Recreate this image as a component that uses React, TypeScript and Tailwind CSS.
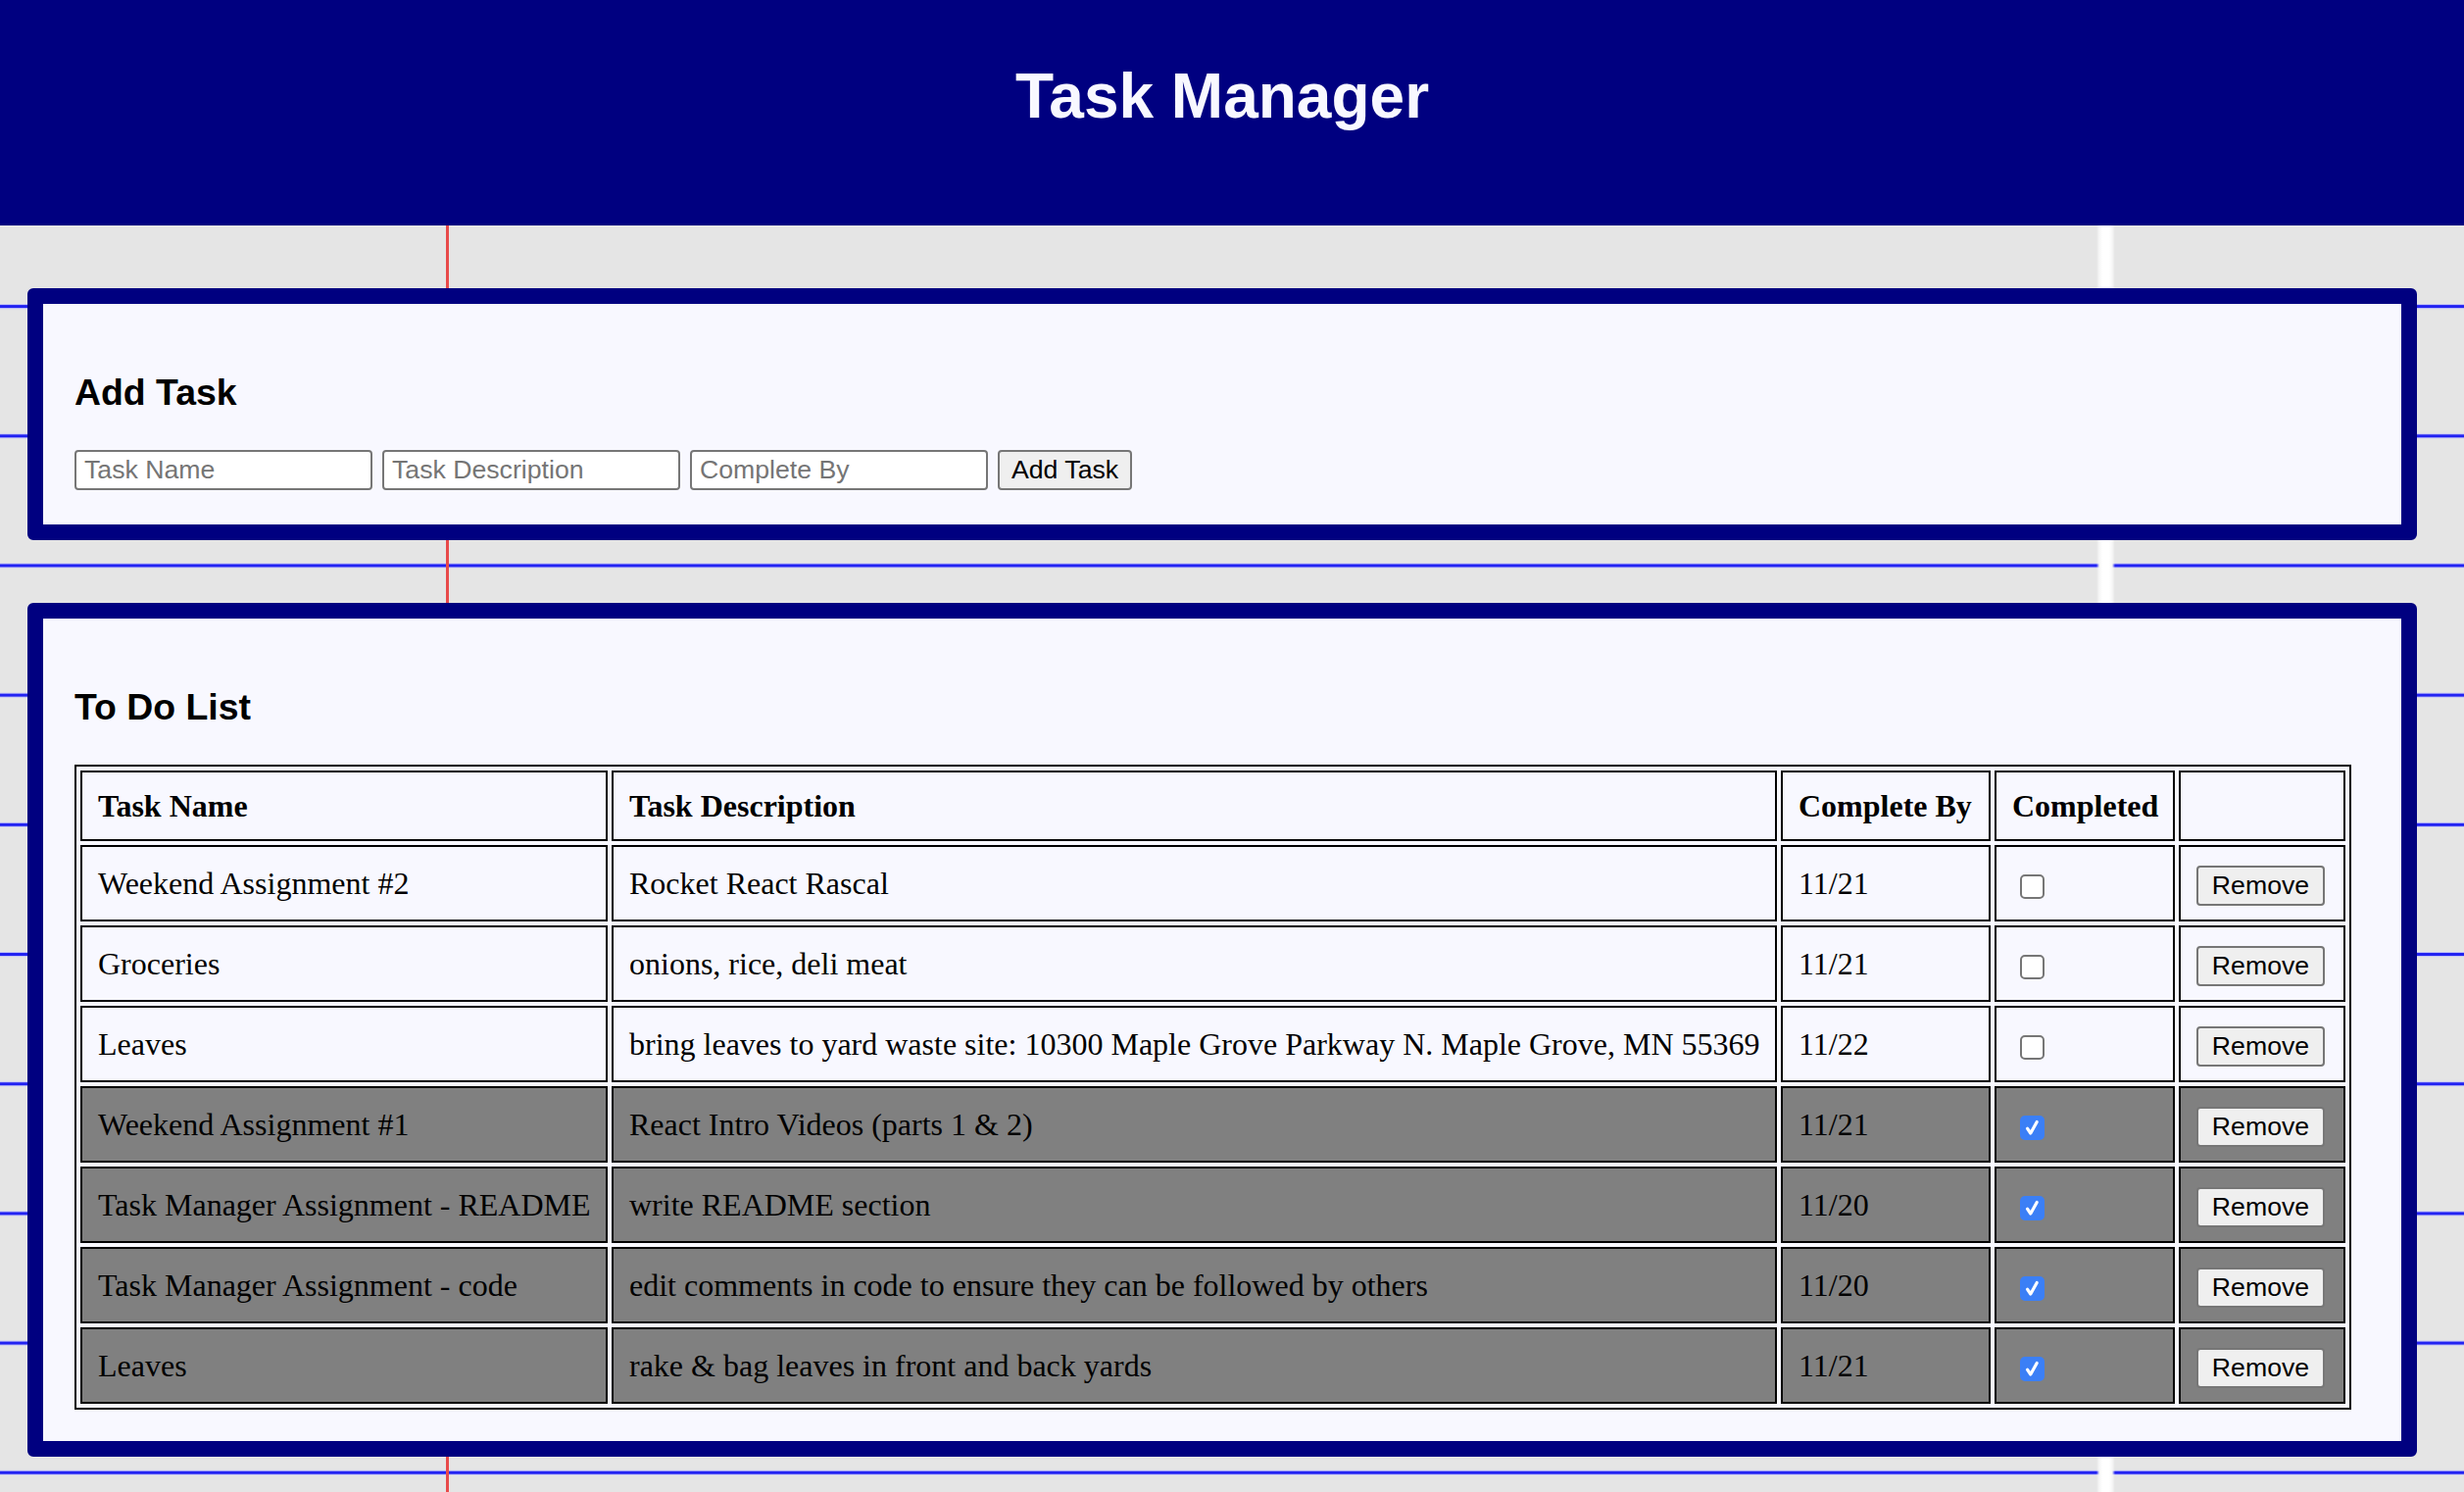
import React from 'react';

type Task = {
  name: string;
  description: string;
  completeBy: string;
  completed: boolean;
};

const initialTasks: Task[] = [
  { name: 'Weekend Assignment #2', description: 'Rocket React Rascal', completeBy: '11/21', completed: false },
  { name: 'Groceries', description: 'onions, rice, deli meat', completeBy: '11/21', completed: false },
  { name: 'Leaves', description: 'bring leaves to yard waste site: 10300 Maple Grove Parkway N. Maple Grove, MN 55369', completeBy: '11/22', completed: false },
  { name: 'Weekend Assignment #1', description: 'React Intro Videos (parts 1 & 2)', completeBy: '11/21', completed: true },
  { name: 'Task Manager Assignment - README', description: 'write README section', completeBy: '11/20', completed: true },
  { name: 'Task Manager Assignment - code', description: 'edit comments in code to ensure they can be followed by others', completeBy: '11/20', completed: true },
  { name: 'Leaves', description: 'rake & bag leaves in front and back yards', completeBy: '11/21', completed: true },
];

const Card: React.FC<{ title: string; children: React.ReactNode }> = ({ title, children }) => (
  <section className="ml-[28px] mt-[64px] w-[2438px] rounded-[6px] border-[16px] border-[#000080] bg-[#f8f8ff] p-[32px]">
    <h3 className="my-[37px] font-['Liberation_Sans',Arial,sans-serif] text-[37.4px] font-bold leading-[43px] text-black">
      {title}
    </h3>
    {children}
  </section>
);

const CheckBox: React.FC<{ checked: boolean; onChange: () => void }> = ({ checked, onChange }) => (
  <span className="relative ml-[8px] inline-block h-[25px] w-[25px] align-middle">
    <input
      type="checkbox"
      checked={checked}
      onChange={onChange}
      className={`block h-[25px] w-[25px] cursor-pointer appearance-none rounded-[5px] ${
        checked ? 'bg-[#3b7ff6]' : 'border-2 border-[#767676] bg-white'
      }`}
    />
    {checked && (
      <svg viewBox="0 0 25 25" className="pointer-events-none absolute inset-0 h-[25px] w-[25px]">
        <path d="M7.5 13.2 L10.8 18 L17.2 6.5" fill="none" stroke="white" strokeWidth="3.2" strokeLinecap="round" strokeLinejoin="round" />
      </svg>
    )}
  </span>
);

const App: React.FC = () => {
  const [tasks, setTasks] = React.useState<Task[]>(initialTasks);
  const [name, setName] = React.useState('');
  const [description, setDescription] = React.useState('');
  const [completeBy, setCompleteBy] = React.useState('');

  const addTask = () => {
    if (!name) return;
    setTasks([{ name, description, completeBy, completed: false }, ...tasks]);
    setName('');
    setDescription('');
    setCompleteBy('');
  };

  const toggle = (i: number) =>
    setTasks(tasks.map((t, idx) => (idx === i ? { ...t, completed: !t.completed } : t)));

  const remove = (i: number) => setTasks(tasks.filter((_, idx) => idx !== i));

  const inputClass =
    "h-[41px] w-[304px] rounded-[4px] border-2 border-[#767676] bg-white px-[8px] font-['Liberation_Sans',Arial,sans-serif] text-[26.67px] text-black placeholder:text-[#757575] outline-none";
  const buttonClass =
    "h-[41px] rounded-[4px] border-2 border-[#767676] bg-[#efefef] px-[12px] font-['Liberation_Sans',Arial,sans-serif] text-[26.67px] leading-none text-black";

  return (
    <div className="min-h-screen bg-[#e5e5e5] bg-[linear-gradient(to_right,transparent_455px,#e84a4a_455px,#e84a4a_458px,transparent_458px),linear-gradient(to_right,transparent_2139px,#f6f6f6_2142px,#ffffff_2145px,#ffffff_2152px,#f6f6f6_2155px,transparent_2158px),linear-gradient(to_bottom,transparent_46px,#c4c4f6_46px,#c4c4f6_47px,#2323f2_47px,#2323f2_50px,#c4c4f6_50px,#c4c4f6_51px,transparent_51px)] bg-[length:100%_132.2px] pb-[40px]">
      {/* Header */}
      <header className="h-[230px] bg-[#000080]">
        <h1 className="ml-[28px] w-[2438px] pt-[50px] text-center font-['Liberation_Sans',Arial,sans-serif] text-[64px] font-bold text-[#f8f8ff]">
          Task Manager
        </h1>
      </header>

      {/* Add Task */}
      <Card title="Add Task">
        <div className="mb-[3px] flex items-center gap-[10px]">
          <input className={inputClass} placeholder="Task Name" value={name} onChange={e => setName(e.target.value)} />
          <input className={inputClass} placeholder="Task Description" value={description} onChange={e => setDescription(e.target.value)} />
          <input className={inputClass} placeholder="Complete By" value={completeBy} onChange={e => setCompleteBy(e.target.value)} />
          <button className={buttonClass} onClick={addTask}>
            Add Task
          </button>
        </div>
      </Card>

      {/* To Do List */}
      <Card title="To Do List">
        <table className="mt-[3px] w-[2323px] table-fixed border-separate border-spacing-[4px] border-2 border-black font-['Liberation_Serif','Times_New_Roman',serif] text-[32px] text-black">
          <thead>
            <tr>
              <th className="h-[72px] w-[538px] border-2 border-black px-[16px] text-left font-bold">Task Name</th>
              <th className="h-[72px] w-[1189px] border-2 border-black px-[16px] text-left font-bold">Task Description</th>
              <th className="h-[72px] w-[214px] border-2 border-black px-[16px] text-left font-bold">Complete By</th>
              <th className="h-[72px] w-[184px] border-2 border-black px-[16px] text-left font-bold">Completed</th>
              <th className="h-[72px] w-[170px] border-2 border-black px-[16px]"></th>
            </tr>
          </thead>
          <tbody>
            {tasks.map((task, i) => {
              const cell = `h-[78px] border-2 border-black px-[16px] whitespace-nowrap ${task.completed ? 'bg-[#808080]' : ''}`;
              return (
                <tr key={i}>
                  <td className={cell}>{task.name}</td>
                  <td className={cell}>{task.description}</td>
                  <td className={cell}>{task.completeBy}</td>
                  <td className={cell}>
                    <CheckBox checked={task.completed} onChange={() => toggle(i)} />
                  </td>
                  <td className={cell}>
                    <button className={`${buttonClass} w-[131px] px-0`} onClick={() => remove(i)}>
                      Remove
                    </button>
                  </td>
                </tr>
              );
            })}
          </tbody>
        </table>
      </Card>
    </div>
  );
};

export default App;
